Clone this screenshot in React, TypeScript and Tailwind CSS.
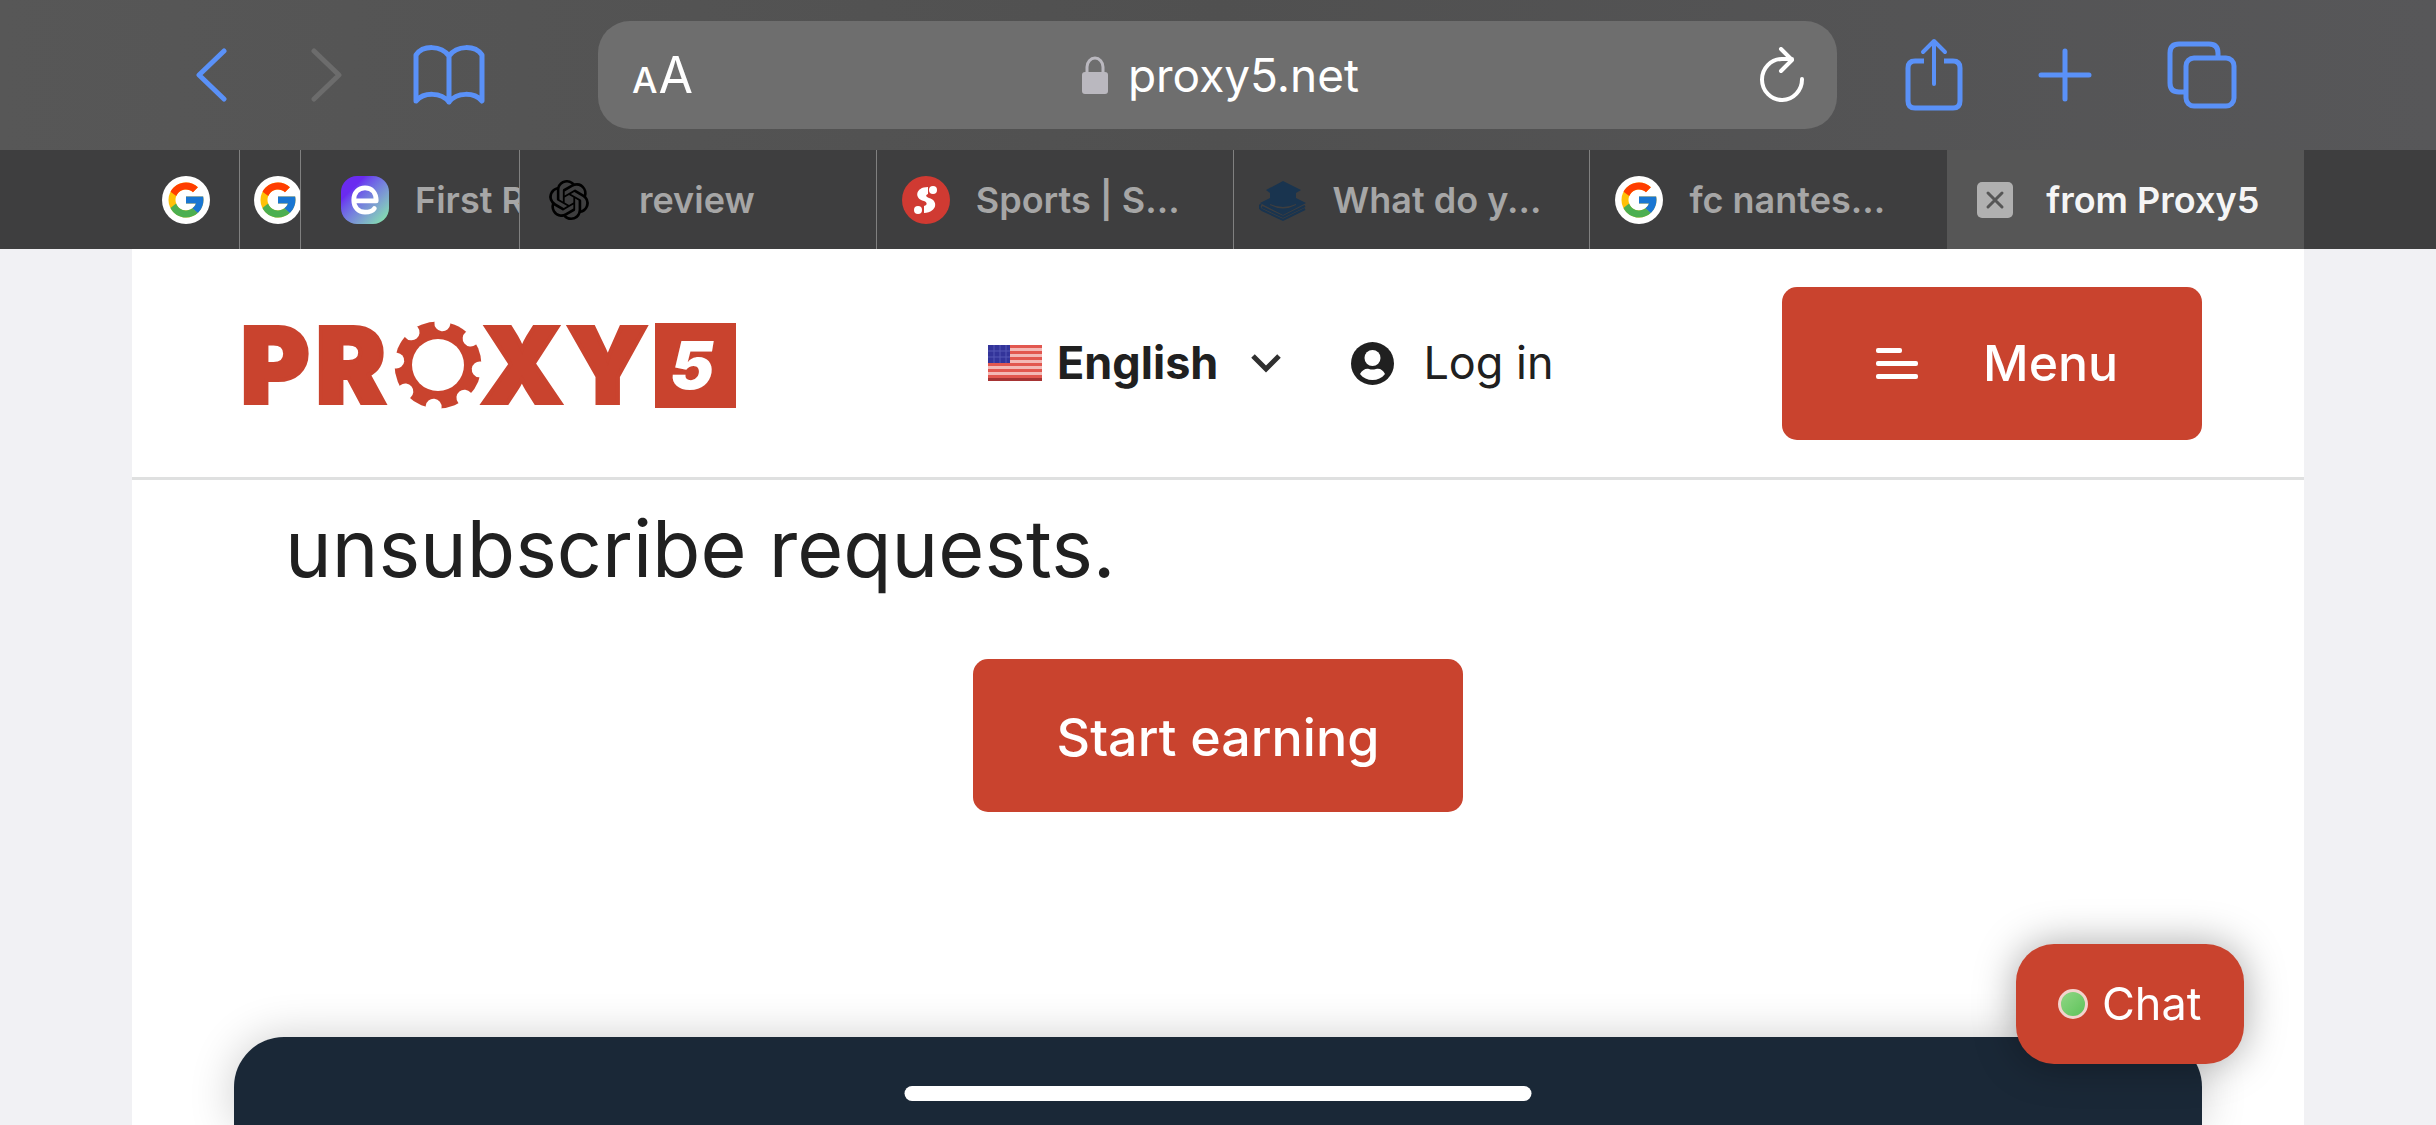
import { ReactNode, useState } from 'react'
import { FcGoogle } from 'react-icons/fc'
import { SiOpenai } from 'react-icons/si'

interface Tab {
  id: string
  title?: string
  icon: ReactNode
  className: string
  titleClassName?: string
}

const tabs: Tab[] = [
  { id: 'google-1', icon: <GoogleIcon />, className: 'w-[108px] pl-[30px]' },
  { id: 'google-2', icon: <GoogleIcon />, className: 'w-[61px] pl-[14px]' },
  { id: 'first', title: 'First R', icon: <EIcon />, className: 'w-[219px] pl-[40px]' },
  { id: 'review', title: 'review', icon: <OpenAiIcon />, className: 'flex-1 pl-[25px]', titleClassName: 'pl-[20px]' },
  { id: 'sports', title: 'Sports | S...', icon: <SportsIcon />, className: 'flex-1 pl-[25px]' },
  { id: 'what', title: 'What do y...', icon: <BooksIcon />, className: 'flex-1 pl-[25px]' },
  { id: 'nantes', title: 'fc nantes...', icon: <GoogleIcon />, className: 'flex-1 pl-[25px]' },
]

export default function App() {
  return (
    <div className="flex h-screen flex-col overflow-hidden bg-[#f1f1f4] font-['Inter',sans-serif] text-[#202020]">
      <Toolbar />
      <TabBar />
      <div className="mx-[132px] flex flex-1 flex-col bg-white">
        <SiteHeader />
        <main className="flex flex-1 flex-col items-center">
          <p className="w-full px-[153px] pt-[20px] text-[79px] leading-[96px]">unsubscribe requests.</p>
          <button className="mt-[63px] h-[153px] w-[490px] rounded-[15px] bg-[#c9432e] pt-1 text-[52px] font-medium text-white" type="button">
            Start earning
          </button>
          <div className="mt-[225px] w-full flex-1 px-[102px]">
            <div className="h-full rounded-t-[50px] bg-[#1a2837] shadow-[0_0_45px_rgba(0,0,0,0.2)]" />
          </div>
        </main>
      </div>
      <button
        className="fixed right-[192px] bottom-[61px] flex h-[120px] w-[228px] items-center gap-[14px] rounded-[38px] bg-[#c9432e] pl-[42px] text-[45px] text-white shadow-[0_0_40px_rgba(0,0,0,0.35)]"
        type="button"
      >
        <span className="size-[30px] rounded-full border-3 border-[#f3d3cd] bg-linear-to-br from-[#8fd684] to-[#5cc35a]" />
        Chat
      </button>
      <div className="fixed bottom-6 left-1/2 h-[15px] w-[627px] -translate-x-1/2 rounded-full bg-white" />
    </div>
  )
}

function Toolbar() {
  const [address, setAddress] = useState('proxy5.net')

  return (
    <div className="flex h-[150px] shrink-0 items-center bg-linear-to-r from-[#575757] via-[#505050] to-[#575759] pr-[199px] pl-[196px] text-[#5a91f8]">
      <button aria-label="Back" type="button">
        <svg className="h-[56px] w-[32px]" fill="none" stroke="currentColor" strokeLinecap="round" strokeLinejoin="round" strokeWidth="5" viewBox="0 0 32 56">
          <path d="M28 4 3 28l25 24" />
        </svg>
      </button>
      <button aria-label="Forward" className="ml-[82px] text-[#6c6c6c]" disabled type="button">
        <svg className="h-[56px] w-[32px]" fill="none" stroke="currentColor" strokeLinecap="round" strokeLinejoin="round" strokeWidth="5" viewBox="0 0 32 56">
          <path d="m4 4 25 24L4 52" />
        </svg>
      </button>
      <button aria-label="Bookmarks" className="ml-[71px]" type="button">
        <svg className="h-[60px] w-[72px]" fill="none" stroke="currentColor" strokeLinecap="round" strokeLinejoin="round" strokeWidth="5" viewBox="0 0 72 60">
          <path d="M36 11C28 0 10 0 3 10v46c8-9 25-9 33 1 8-10 25-10 33-1V10C62 0 44 0 36 11v46" />
        </svg>
      </button>
      <div className="mr-[68px] ml-[113px] flex h-[108px] flex-1 items-center rounded-[32px] bg-[#6e6e6e] pr-[32px] pl-[34px] text-white">
        <button aria-label="Text size" className="flex items-baseline gap-px leading-none" type="button">
          <span className="text-[36px] font-medium">A</span>
          <span className="text-[50px]">A</span>
        </button>
        <label className="flex flex-1 items-center justify-center gap-[20px] pr-[11px]">
          <svg className="h-[38px] w-[26px] text-[#bab8bf]" viewBox="0 0 26 38">
            <rect fill="currentColor" height="22" rx="3" width="26" y="16" />
            <path d="M5 18v-7a8 9 0 0 1 16 0v7" fill="none" stroke="currentColor" strokeWidth="3" />
          </svg>
          <input
            aria-label="Address"
            className="field-sizing-content bg-transparent text-[46px] outline-none"
            onChange={(event) => setAddress(event.target.value)}
            value={address}
          />
        </label>
        <button aria-label="Reload" type="button">
          <svg className="h-[56px] w-[46px]" fill="none" stroke="currentColor" strokeLinecap="round" strokeLinejoin="round" strokeWidth="4" viewBox="0 0 46 56">
            <path d="M43 32A20 20.500 0 1 1 23 12h10M22 2l11 11-11 11" />
          </svg>
        </button>
      </div>
      <button aria-label="Share" type="button">
        <svg className="h-[74px] w-[58px]" fill="none" stroke="currentColor" strokeLinecap="round" strokeLinejoin="round" strokeWidth="5" viewBox="0 0 58 74">
          <path d="M19 23H10q-7 0-7 7v33q0 7 7 7h38q7 0 7-7V30q0-7-7-7h-9" strokeLinecap="butt" />
          <path d="M29 46V3M18 14 29 3l11 11" strokeWidth="4" />
        </svg>
      </button>
      <button aria-label="New tab" className="ml-[75px]" type="button">
        <svg className="size-[54px]" stroke="currentColor" strokeLinecap="round" strokeWidth="5" viewBox="0 0 54 54">
          <path d="M27 3v48M3 27h48" />
        </svg>
      </button>
      <button aria-label="Show tabs" className="ml-[75px]" type="button">
        <svg className="h-[68px] w-[70px]" fill="none" stroke="currentColor" strokeWidth="5" viewBox="0 0 70 68">
          <rect height="48" rx="8" width="48" x="19" y="17" />
          <path d="M19 51h-7q-9 0-9-9V12q0-9 9-9h30q9 0 9 9v5" />
        </svg>
      </button>
    </div>
  )
}

function TabBar() {
  return (
    <nav className="flex h-[99px] shrink-0 bg-[#3e3e3f] px-[132px] text-[36px] font-semibold text-[#a6a6a6]">
      {tabs.map((tab) => (
        <button
          className={`flex min-w-0 items-center gap-[26px] overflow-hidden border-r border-[#808080] last-of-type:border-transparent ${tab.className}`}
          key={tab.id}
          type="button"
        >
          <span className="size-[48px] shrink-0">{tab.icon}</span>
          {tab.title && <span className={`shrink-0 whitespace-nowrap ${tab.titleClassName ?? ''}`}>{tab.title}</span>}
        </button>
      ))}
      <div className="flex min-w-0 flex-1 items-center gap-[33px] bg-[#565656] pl-[26px] text-[#f5f5f5]">
        <button aria-label="Close tab" className="ml-1" type="button">
          <svg className="size-[36px]" viewBox="0 0 36 36">
            <rect fill="#b0b0b0" height="36" rx="5" width="36" />
            <path d="m11 11 14 14m0-14L11 25" stroke="#565656" strokeLinecap="round" strokeWidth="3" />
          </svg>
        </button>
        <span className="whitespace-nowrap">from Proxy5</span>
      </div>
    </nav>
  )
}

function SiteHeader() {
  return (
    <header className="flex h-[231px] shrink-0 items-center border-b-3 border-[#dfe0e0] pr-[102px] pl-[112px]">
      <a aria-label="Proxy5" href="#">
        <Logo />
      </a>
      <div className="flex flex-1 items-center pl-[252px]">
        <FlagIcon />
        <label className="ml-[15px] flex items-center">
          <select aria-label="Language" className="field-sizing-content appearance-none bg-transparent text-[45px] font-bold">
            <option>English</option>
          </select>
          <svg className="ml-[32px] h-[20px] w-[32px]" fill="none" stroke="#303030" strokeWidth="5" viewBox="0 0 32 20">
            <path d="m3 3 13 13L29 3" />
          </svg>
        </label>
        <a className="ml-[69px] flex items-center gap-[29px] text-[45px]" href="#">
          <svg className="size-[43px]" viewBox="0 0 43 43">
            <circle cx="21.500" cy="21.500" fill="#202020" r="21.500" />
            <ellipse cx="21.500" cy="16" fill="#fff" rx="8" ry="8" />
            <path d="M9 32c2-4 6-6 9-5q3 1 7 0c4-1 7 1 9 5-6 8-19 8-25 0Z" fill="#fff" />
          </svg>
          Log in
        </a>
      </div>
      <button className="flex h-[153px] w-[420px] items-center gap-[65px] rounded-[15px] bg-[#c9432e] pl-[94px] text-[50px] font-medium text-white" type="button">
        <svg className="h-[31px] w-[42px]" fill="currentColor" viewBox="0 0 42 31">
          <rect height="5" rx="2" width="26" />
          <rect height="5" rx="2" width="42" y="13" />
          <rect height="5" rx="2" width="42" y="26" />
        </svg>
        Menu
      </button>
    </header>
  )
}

function Logo() {
  const notches = [0, 45, 90, 135, 180, 225, 270, 315]

  return (
    <svg className="h-[92px] w-[492px] overflow-visible font-['Inter',sans-serif] font-black" fill="#c9432e" fontSize="104" viewBox="0 -4 492 92">
      <g stroke="#c9432e" strokeWidth="4">
        <text x="-3" y="82">P</text>
        <text x="72" y="82">R</text>
        <text x="237" y="82">X</text>
        <text x="323" y="82">Y</text>
      </g>
      <circle cx="194" cy="44" r="43.500" />
      <circle cx="194" cy="44" fill="#fff" r="26" />
      {notches.map((angle) => (
        <circle cx="194" cy="2" fill="#fff" key={angle} r="8" transform={`rotate(${angle + 6} 194 44)`} />
      ))}
      <rect height="85" width="81" x="411" y="2" />
      <text fill="#fff" fontSize="66" fontStyle="italic" x="426" y="68">5</text>
    </svg>
  )
}

function FlagIcon() {
  const stripes = [0, 6, 12, 18, 24, 30]

  return (
    <svg className="h-[36px] w-[54px]" viewBox="0 0 54 36">
      <rect fill="#f3b9b6" height="36" width="54" />
      {stripes.map((y) => (
        <rect fill="#e2574f" height="3" key={y} width="54" y={y} />
      ))}
      <rect fill="#a63434" height="3" width="54" y="33" />
      <rect fill="#33349a" height="18" width="22" />
      <path d="M0 6h22M0 12h22M6 0v18M12 0v18M18 0v18" stroke="#5556b4" />
    </svg>
  )
}

function GoogleIcon() {
  return (
    <span className="flex size-[48px] items-center justify-center rounded-full bg-white">
      <FcGoogle size={42} />
    </span>
  )
}

function OpenAiIcon() {
  return (
    <span className="flex size-[48px] items-center justify-center text-black">
      <SiOpenai size={40} />
    </span>
  )
}

function EIcon() {
  return (
    <span className="flex size-[48px] items-center justify-center rounded-[16px] bg-linear-to-br from-[#6a2bf0] from-25% via-[#7d9fd0] via-65% to-[#86efa0]">
      <svg className="size-[30px]" fill="none" stroke="#fff" strokeLinecap="round" strokeLinejoin="round" strokeWidth="5" viewBox="0 0 32 32">
        <path d="M4 17h24C28 8 23 3 16 3S4 8 4 16s5 13 12 13c5 0 8-1 10-4" />
      </svg>
    </span>
  )
}

function SportsIcon() {
  return (
    <svg className="size-[48px]" viewBox="0 0 48 48">
      <circle cx="24" cy="24" fill="#d03a32" r="24" />
      <path d="M26 11v7c-3 1-2 3 1 4 9 2 9 14-5 15v-7c4-1 3-4 0-5-10-2-9-14 4-14Z" fill="#fff" />
      <circle cx="31" cy="14" fill="#fff" r="4" />
      <circle cx="16" cy="34" fill="#fff" r="4" />
    </svg>
  )
}

function BooksIcon() {
  return (
    <svg className="size-[48px]" fill="#19344f" viewBox="0 0 48 48">
      <path d="M24 5 42 14 37 17v11q-13 6-26 0V17l-4-3Z" />
      <path d="M11 22 1 27l23 12 23-12-10-5v7q-13 7-26 0Z" />
      <path d="M2 28q-3 4 1 6l21 10 22-11M3 31l21 10 22-11" fill="none" stroke="#19344f" strokeWidth="2" />
    </svg>
  )
}
